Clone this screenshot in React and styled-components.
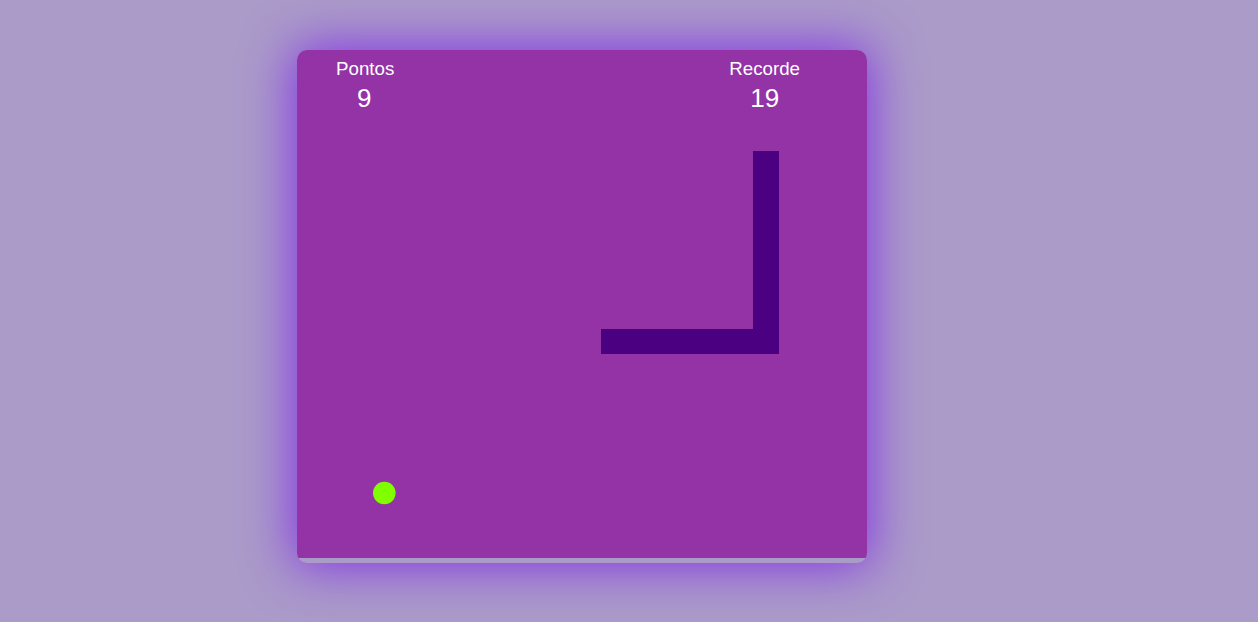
import React from 'react'
import styled, { createGlobalStyle } from 'styled-components'

const GlobalStyle = createGlobalStyle`
  html, body {
    margin: 0;
    padding: 0;
    background: #ab9bc9;
    font-family: "Liberation Sans", Arial, sans-serif;
  }
`

const Page = styled.div`
  width: 1258px;
  height: 622px;
  box-sizing: border-box;
  padding: 50px 0 0 297px;
`

const Game = styled.div`
  width: 570px;
  border-radius: 10px;
  overflow: hidden;
  padding-bottom: 5px;
  box-shadow: 0 0 50px 4px rgba(128, 43, 230, 0.9);
`

const Board = styled.div`
  position: relative;
  height: 508px;
  background: #9433a6;
`

const Header = styled.div`
  position: relative;
  z-index: 1;
  display: flex;
  justify-content: space-between;
  padding: 8px 67px 0 39px;
`

const Score = styled.div`
  display: flex;
  flex-direction: column;
  align-items: center;
  color: #fff;
`

const Label = styled.span`
  font-size: 18.72px;
  line-height: 21px;
`

const Value = styled.span`
  font-size: 26px;
  line-height: 30px;
  margin-top: 4px;
  margin-left: ${p => (p.$shift ? '-2px' : '0')};
`

const Field = styled.svg`
  position: absolute;
  inset: 0;
`

const snake = [
  { x: 456, y: 101, w: 26, h: 203 },
  { x: 304, y: 279, w: 178, h: 25 },
]

export default function App() {
  return (
    <>
      <GlobalStyle />
      <Page>
        <Game>
          <Board>
            <Field width="570" height="508">
              {snake.map((s, i) => (
                <rect key={i} x={s.x} y={s.y} width={s.w} height={s.h} fill="#4b0082" />
              ))}
              <circle cx="87.3" cy="443" r="11.3" fill="#7fff00" />
            </Field>
            <Header>
              <Score>
                <Label>Pontos</Label>
                <Value $shift>9</Value>
              </Score>
              <Score>
                <Label>Recorde</Label>
                <Value>19</Value>
              </Score>
            </Header>
          </Board>
        </Game>
      </Page>
    </>
  )
}
